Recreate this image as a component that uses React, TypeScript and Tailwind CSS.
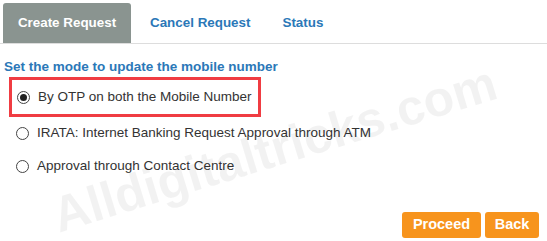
import React, { useState } from 'react';

const options = [
  'By OTP on both the Mobile Number',
  'IRATA: Internet Banking Request Approval through ATM',
  'Approval through Contact Centre',
];

const tabs = [
  { label: 'Create Request', cls: 'w-[128px] justify-center mr-[4px]' },
  { label: 'Cancel Request', cls: 'px-[15px] mr-[2px]' },
  { label: 'Status', cls: 'px-[15px]' },
];

const Radio: React.FC<{ checked: boolean }> = ({ checked }) => (
  <span className="flex h-[13px] w-[13px] shrink-0 items-center justify-center rounded-full border border-[#444] bg-white">
    {checked && <span className="h-[7px] w-[7px] rounded-full bg-[#222]" />}
  </span>
);

const App: React.FC = () => {
  const [tab, setTab] = useState('Create Request');
  const [mode, setMode] = useState(0);

  return (
    <div className="relative h-[241px] w-[547px] overflow-hidden bg-white font-['Liberation_Sans',Arial,sans-serif]">
      {/* tabs */}
      <div className="flex h-[44px] items-end border-b border-[#dddddd] pl-[3px]">
        {tabs.map((t) => (
          <button
            key={t.label}
            onClick={() => setTab(t.label)}
            className={`flex h-[40px] items-center rounded-t-[3px] text-[13.4px] font-bold ${t.cls} ${
              tab === t.label ? 'bg-[#8a9490] text-white' : 'text-[#2b78b8]'
            }`}
          >
            {t.label}
          </button>
        ))}
      </div>

      <div className="px-[4px] pt-[15px]">
        <h3 className="text-[13.5px] leading-[15px] font-bold text-[#2b78b8]">Set the mode to update the mobile number</h3>

        <div className="mt-[3px] flex flex-col">
          {options.map((o, i) => (
            <label
              key={o}
              onClick={() => setMode(i)}
              className={`flex cursor-pointer items-center gap-[8px] text-[13.5px] text-[#333] ${
                i === 0
                  ? 'ml-[5px] h-[40px] w-[252px] border-[3px] border-[#f03c42] pl-[5px]'
                  : 'h-[33px] pl-[12px]'
              }`}
            >
              <Radio checked={mode === i} />
              <span>{o}</span>
            </label>
          ))}
        </div>

        <div className="mt-[29px] flex justify-end gap-[4px] pr-[4px]">
          <button className="h-[26px] w-[79px] rounded-[3px] bg-[#f7941d] text-[14.5px] font-bold text-white">Proceed</button>
          <button className="h-[26px] w-[54px] rounded-[3px] bg-[#f7941d] text-[14.5px] font-bold text-white">Back</button>
        </div>
      </div>

      {/* watermark */}
      <div className="pointer-events-none absolute left-[44px] top-[112px] -rotate-[17deg] text-[50px] font-bold whitespace-nowrap text-black/[0.05]">
        Alldigitaltricks.com
      </div>
    </div>
  );
};

export default App;
